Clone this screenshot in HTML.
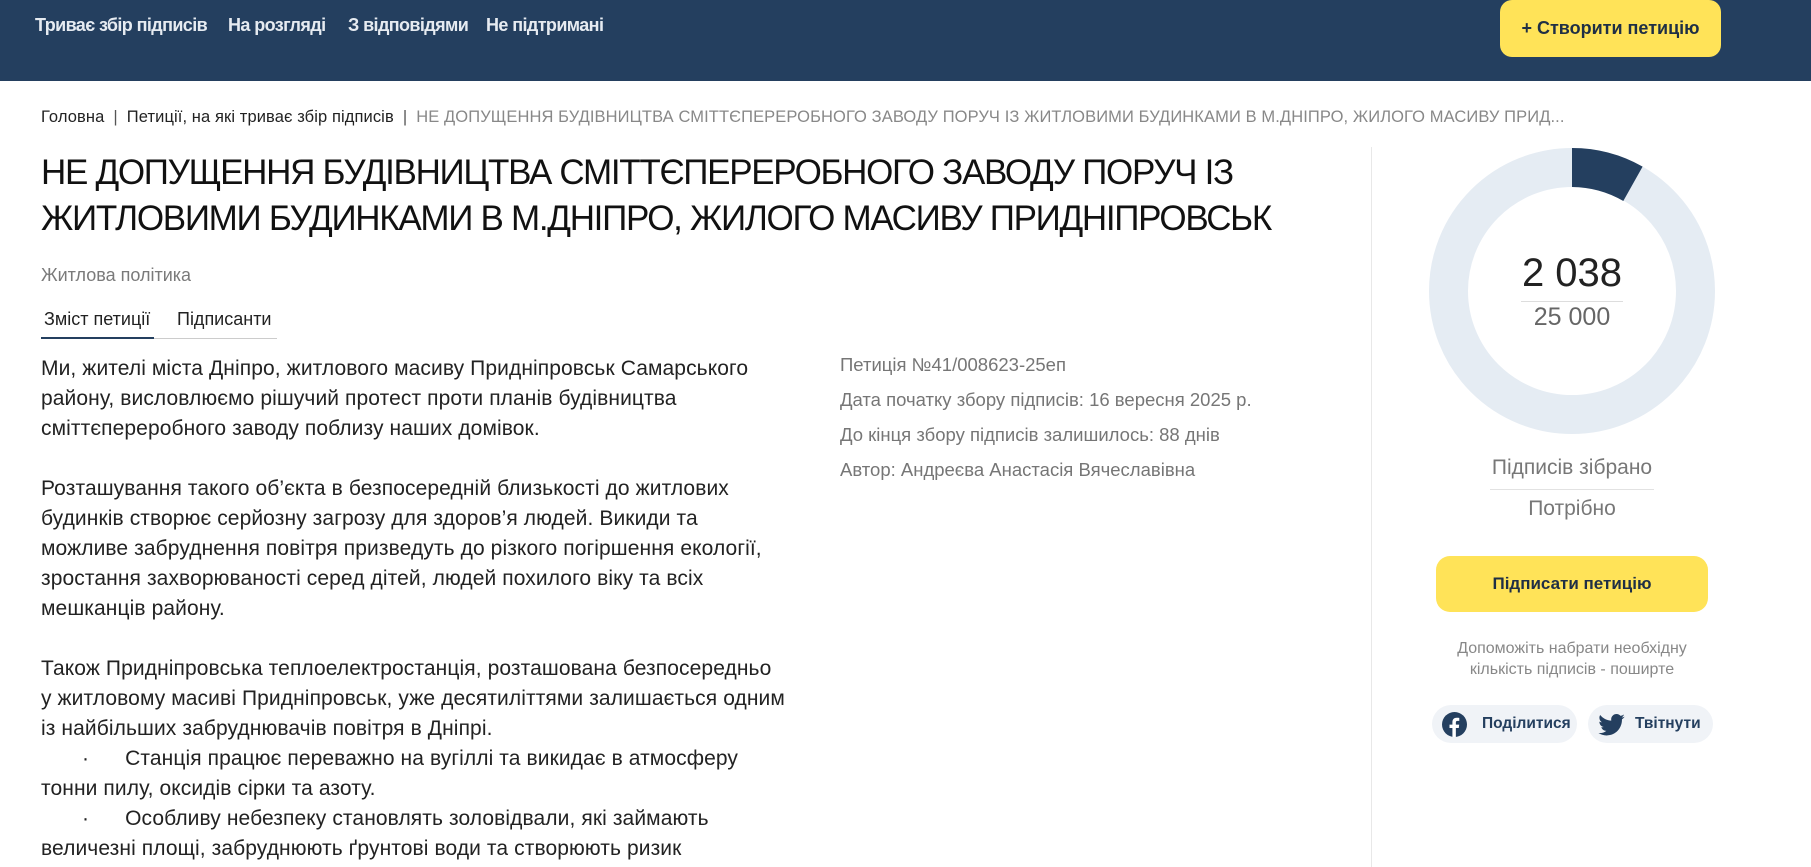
<!DOCTYPE html>
<html><head><meta charset="utf-8">
<style>
*{margin:0;padding:0;box-sizing:border-box}
body{width:1811px;height:867px;overflow:hidden;background:#fff;font-family:"Liberation Sans",sans-serif;color:#1b1b1b;position:relative}
.nav{position:absolute;left:0;top:0;width:1811px;height:81px;background:#243f5f}
.nav a{position:absolute;top:15px;color:#e6ebf1;font-weight:bold;font-size:18px;text-decoration:none;letter-spacing:-0.6px}
.create{position:absolute;left:1500px;top:0;width:221px;height:57px;background:#ffe358;border-radius:12px;color:#1f2f45;font-weight:bold;font-size:18px;text-align:center;line-height:57px}
.abs{position:absolute;white-space:nowrap}
.bc{top:108px;left:41px;font-size:16.5px;color:#222;letter-spacing:0.1px}
.bc .sep{color:#555;margin:0 9px}
.bc .g{color:#888}
.title{left:41px;top:150px;font-size:35px;line-height:46px;letter-spacing:-1.3px;color:#111}
.cat{left:41px;top:265px;font-size:18px;color:#7a7a7a}
.tab{top:309px;font-size:18px;color:#222}
.body{left:41px;top:354px;font-size:21px;line-height:30px;color:#222;letter-spacing:0.1px}
.info{left:840px;font-size:18.5px;color:#767676}
.div{position:absolute;left:1371px;top:147px;width:1px;height:720px;background:#e8e8e8}
.c{text-align:center;position:absolute;left:1436px;width:272px}
</style></head><body>
<div class="nav">
<a style="left:35px">Триває збір підписів</a>
<a style="left:228px">На розгляді</a>
<a style="left:348px">З відповідями</a>
<a style="left:486px">Не підтримані</a>
<div class="create">+ Створити петицію</div>
</div>
<div class="abs bc">Головна<span class="sep">|</span>Петиції, на які триває збір підписів<span class="sep">|</span><span class="g">НЕ ДОПУЩЕННЯ БУДІВНИЦТВА СМІТТЄПЕРЕРОБНОГО ЗАВОДУ ПОРУЧ ІЗ ЖИТЛОВИМИ БУДИНКАМИ В М.ДНІПРО, ЖИЛОГО МАСИВУ ПРИД...</span></div>
<div class="abs title">НЕ ДОПУЩЕННЯ БУДІВНИЦТВА СМІТТЄПЕРЕРОБНОГО ЗАВОДУ ПОРУЧ ІЗ<br>ЖИТЛОВИМИ БУДИНКАМИ В М.ДНІПРО, ЖИЛОГО МАСИВУ ПРИДНІПРОВСЬК</div>
<div class="abs cat">Житлова політика</div>
<div class="abs tab" style="left:44px">Зміст петиції</div>
<div class="abs tab" style="left:177px">Підписанти</div>
<div style="position:absolute;left:41px;top:338px;width:236px;height:1px;background:#ccc"></div>
<div style="position:absolute;left:41px;top:337px;width:113px;height:2px;background:#243f5f"></div>
<div class="abs body">Ми, жителі міста Дніпро, житлового масиву Придніпровськ Самарського<br>району, висловлюємо рішучий протест проти планів будівництва<br>сміттєпереробного заводу поблизу наших домівок.<br><br>Розташування такого об’єкта в безпосередній близькості до житлових<br>будинків створює серйозну загрозу для здоров’я людей. Викиди та<br>можливе забруднення повітря призведуть до різкого погіршення екології,<br>зростання захворюваності серед дітей, людей похилого віку та всіх<br>мешканців району.<br><br>Також Придніпровська теплоелектростанція, розташована безпосередньо<br>у житловому масиві Придніпровськ, уже десятиліттями залишається одним<br>із найбільших забруднювачів повітря в Дніпрі.<br><span style="padding-left:41px">·</span><span style="padding-left:36px">Станція працює переважно на вугіллі та викидає в атмосферу</span><br>тонни пилу, оксидів сірки та азоту.<br><span style="padding-left:41px">·</span><span style="padding-left:36px">Особливу небезпеку становлять золовідвали, які займають</span><br>величезні площі, забруднюють ґрунтові води та створюють ризик</div>
<div class="abs info" style="top:354px">Петиція №41/008623-25еп</div>
<div class="abs info" style="top:389px">Дата початку збору підписів: 16 вересня 2025 р.</div>
<div class="abs info" style="top:424px">До кінця збору підписів залишилось: 88 днів</div>
<div class="abs info" style="top:459px">Автор: Андреєва Анастасія Вячеславівна</div>
<div class="div"></div>
<svg style="position:absolute;left:1429px;top:148px" width="286" height="286" viewBox="0 0 286 286">
<circle cx="143" cy="143" r="123.5" fill="none" stroke="#e5ecf3" stroke-width="39"/>
<path d="M143 0 A143 143 0 0 1 213.6 18.6 L194.3 53 A104 104 0 0 0 143 39 Z" fill="#243f5f"/>
</svg>
<div class="c" style="top:251px;font-size:40px;color:#222">2 038</div>
<div style="position:absolute;left:1521px;top:301px;width:102px;height:1px;background:#ddd"></div>
<div class="c" style="top:303px;font-size:25px;color:#666">25 000</div>
<div class="c" style="top:456px;font-size:21px;color:#777">Підписів зібрано</div>
<div style="position:absolute;left:1490px;top:489px;width:164px;height:1px;background:#e2e2e2"></div>
<div class="c" style="top:497px;font-size:21px;color:#777">Потрібно</div>
<div style="position:absolute;left:1436px;top:556px;width:272px;height:56px;background:#ffe358;border-radius:14px;text-align:center;line-height:56px;font-weight:bold;font-size:17px;color:#1f2f45">Підписати петицію</div>
<div class="c" style="top:638px;font-size:16px;line-height:21px;color:#888">Допоможіть набрати необхідну<br>кількість підписів - поширте</div>
<div style="position:absolute;left:1432px;top:705px;width:145px;height:38px;background:#f0f3f7;border-radius:19px;font-weight:bold;font-size:15.5px;color:#243f5f;line-height:38px;padding-left:50px">Поділитися
<svg style="position:absolute;left:10px;top:7px" width="25" height="25" viewBox="0 0 24 24"><circle cx="12" cy="12" r="12" fill="#243f5f"/><path d="M13.3 24v-8.6h2.8l.4-3.3h-3.2v-2c0-.9.3-1.6 1.6-1.6h1.7V5.6c-.3 0-1.3-.1-2.5-.1-2.5 0-4.1 1.5-4.1 4.2v2.4H7.2v3.3H10V24z" fill="#fff"/></svg></div>
<div style="position:absolute;left:1588px;top:705px;width:125px;height:38px;background:#f0f3f7;border-radius:19px;font-weight:bold;font-size:15.5px;color:#243f5f;line-height:38px;padding-left:47px">Твітнути
<svg style="position:absolute;left:10px;top:9px" width="27" height="22" viewBox="0 0 24 20"><path d="M24 2.4c-.9.4-1.8.7-2.8.8 1-.6 1.8-1.6 2.200-2.7-1 .6-2 1-3.1 1.2C19.3.7 18 0 16.6 0c-2.7 0-4.9 2.2-4.9 4.9 0 .4 0 .8.1 1.1C7.700 5.8 4.1 3.9 1.7.9c-.4.7-.7 1.6-.7 2.5 0 1.7.9 3.2 2.2 4.1-.8 0-1.6-.2-2.2-.6v.1c0 2.4 1.7 4.4 3.9 4.8-.4.1-.8.2-1.3.2-.3 0-.6 0-.9-.1.6 2 2.4 3.4 4.6 3.4-1.7 1.3-3.8 2.1-6.1 2.1-.4 0-.8 0-1.2-.1 2.2 1.4 4.8 2.2 7.5 2.2 9.1 0 14-7.5 14-14v-.6c1-.7 1.8-1.6 2.5-2.5z" fill="#243f5f"/></svg></div>
</body></html>
